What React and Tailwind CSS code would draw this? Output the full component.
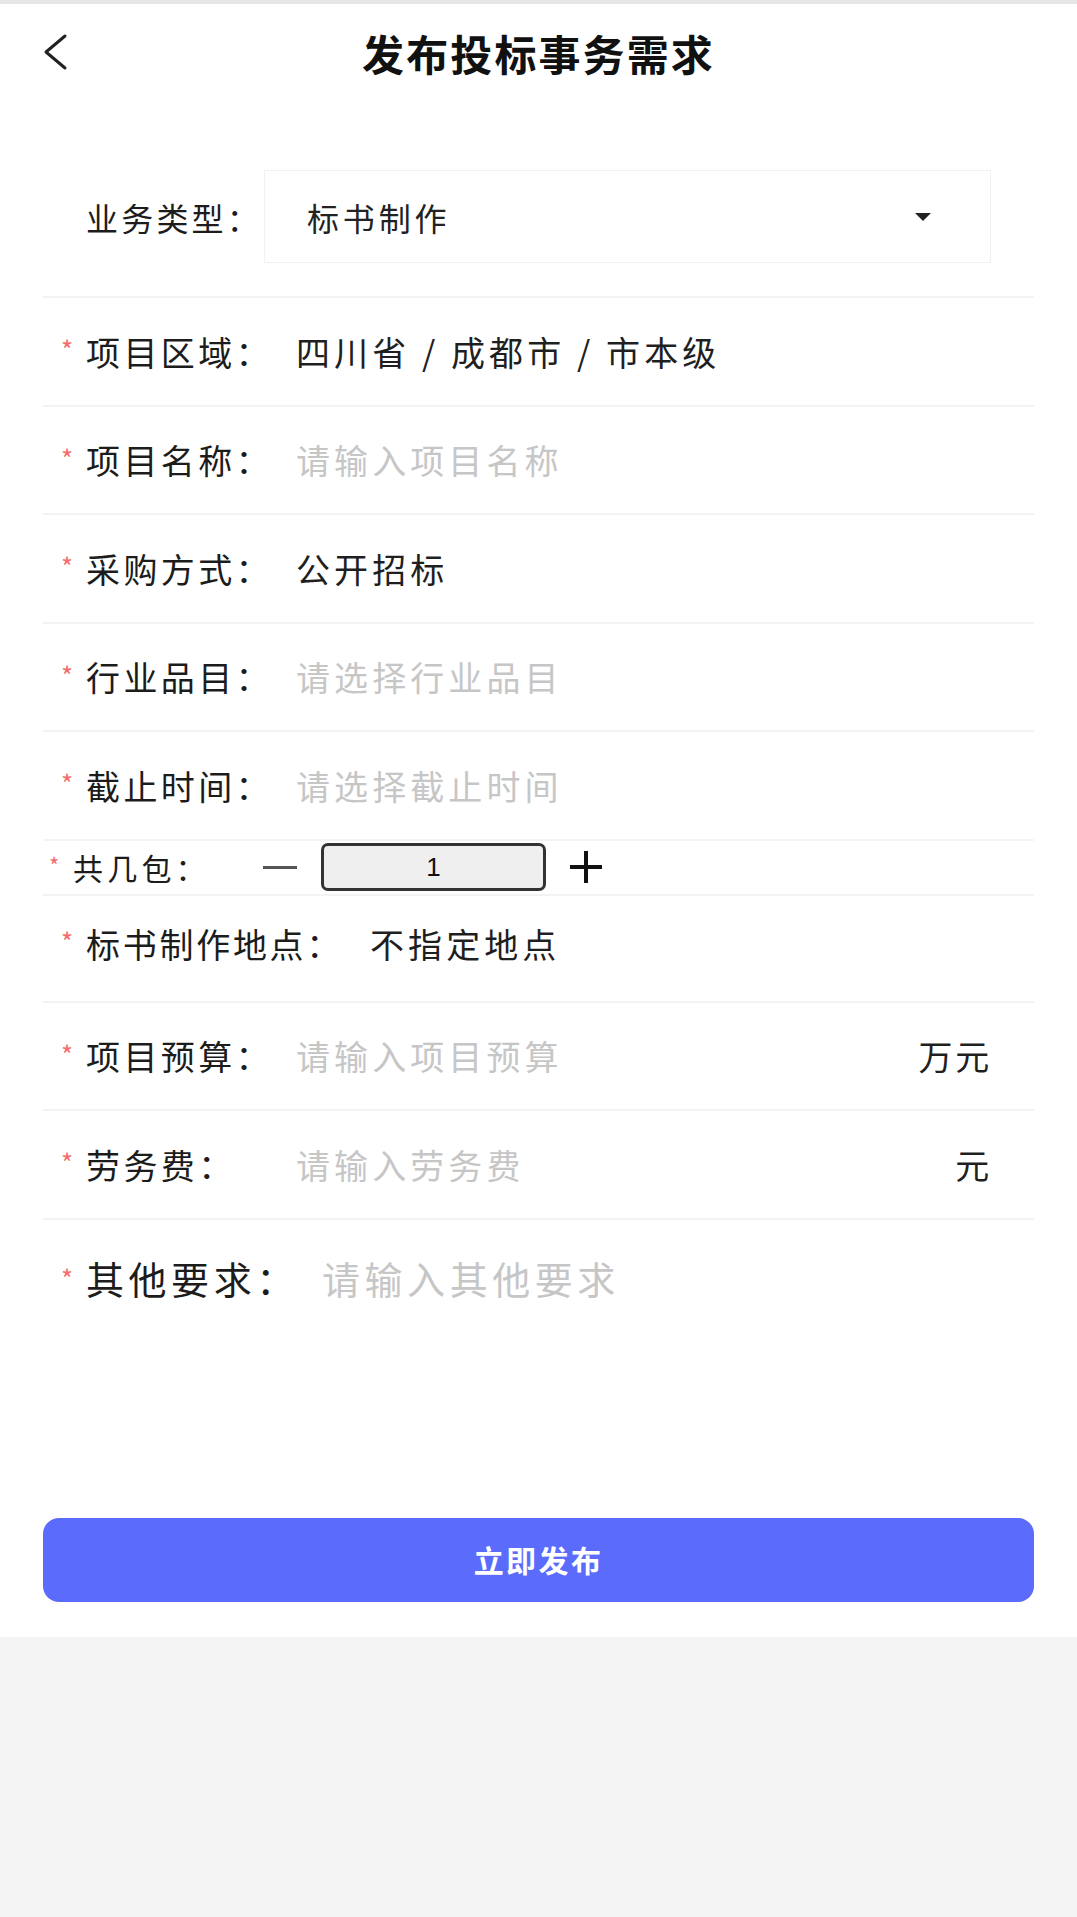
import React from 'react';

const font = { fontFamily: '"Noto Sans CJK SC", "Noto Sans", sans-serif' };

const Star = () => (
  <span className="text-[#f56c6c] text-[26px] leading-none mb-[4px] w-[25px]">*</span>
);

const FormRow = ({ label, value, placeholder, unit }) => (
  <div className="h-[108.5px] flex items-center border-b-2 border-[#f3f3f3] pl-[18px] pr-[42px]">
    <Star />
    <div className="w-[210px] text-[34px] tracking-[0.1em] text-[#1c1c1c]">{label}：</div>
    {value ? (
      <div className="flex-1 text-[34px] tracking-[0.12em] text-[#1f1f1f]">{value}</div>
    ) : (
      <div className="flex-1 text-[34px] tracking-[0.12em] text-[#c6c6c6]">{placeholder}</div>
    )}
    {unit && <div className="text-[34px] tracking-[0.08em] text-[#1f1f1f]">{unit}</div>}
  </div>
);

export default function App() {
  return (
    <div className="w-[1077px] min-h-[1917px] bg-[#f4f4f4]" style={font}>
      <div className="bg-white">
        <div className="h-[4px] bg-[#e6e6e6]" />

        {/* 标题栏 */}
        <div className="h-[96px] flex items-center px-[41px] relative">
          <svg width="28" height="38" viewBox="0 0 28 38" fill="none" stroke="#222" strokeWidth="3" strokeLinecap="round" strokeLinejoin="round">
            <path d="M24 3L5 19l19 16" />
          </svg>
          <h1 className="absolute left-0 right-0 text-center text-[42px] tracking-[0.05em] font-bold text-[#111] pointer-events-none">发布投标事务需求</h1>
        </div>

        {/* 业务类型 */}
        <div className="px-[43px] pt-[70px]">
          <div className="flex items-center pl-[43px] pb-[33px] border-b-2 border-[#f3f3f3]">
            <div className="w-[178px] text-[32px] tracking-[0.1em] text-[#1c1c1c]">业务类型：</div>
            <div className="flex-1 mr-[1px] h-[93px] border border-[#f1f1f1] flex items-center pl-[42px] pr-[58px]">
              <span className="flex-1 text-[32px] tracking-[0.12em] text-[#222]">标书制作</span>
              <svg width="18" height="10" viewBox="0 0 18 10">
                <path d="M1 1h16L9 9z" fill="#222" />
              </svg>
            </div>
            <div className="w-[42px]" />
          </div>

          <FormRow label="项目区域" value="四川省 / 成都市 / 市本级" />
          <FormRow label="项目名称" placeholder="请输入项目名称" />
          <FormRow label="采购方式" value="公开招标" />
          <FormRow label="行业品目" placeholder="请选择行业品目" />
          <FormRow label="截止时间" placeholder="请选择截止时间" />

          {/* 共几包 */}
          <div className="h-[55px] flex items-center border-b-2 border-[#f3f3f3] pl-[6px]">
            <span className="text-[#f56c6c] text-[22px] leading-none mb-[6px] w-[24px]">*</span>
            <div className="w-[190px] text-[30px] tracking-[0.14em] text-[#1c1c1c]">共几包：</div>
            <div className="w-[34px] h-[3px] bg-[#555]" />
            <div className="ml-[24px] w-[225px] h-[48px] rounded-[7px] border-[3px] border-[#333] bg-[#efefef] flex items-center justify-center text-[26px] text-[#111]" style={{ fontFamily: '"Liberation Sans", Arial, sans-serif' }}>1</div>
            <div className="ml-[24px] relative w-[32px] h-[32px]">
              <div className="absolute left-0 top-[14px] w-[32px] h-[4px] bg-[#111]" />
              <div className="absolute left-[14px] top-0 w-[4px] h-[32px] bg-[#111]" />
            </div>
          </div>

          {/* 标书制作地点 */}
          <div className="h-[107px] flex items-center border-b-2 border-[#f3f3f3] pl-[18px] pb-[10px]">
            <Star />
            <div className="w-[284px] text-[34px] tracking-[0.08em] text-[#1c1c1c]">标书制作地点：</div>
            <div className="text-[34px] tracking-[0.12em] text-[#1f1f1f]">不指定地点</div>
          </div>

          <FormRow label="项目预算" placeholder="请输入项目预算" unit="万元" />
          <FormRow label="劳务费" placeholder="请输入劳务费" unit="元" />

          {/* 其他要求 */}
          <div className="h-[298px] flex items-start pl-[18px] pt-[35px]">
            <span className="text-[#f56c6c] text-[26px] leading-none mt-[10px] w-[25px]">*</span>
            <div className="w-[236px] text-[38px] tracking-[0.12em] text-[#1c1c1c] leading-[46px]">其他要求：</div>
            <div className="flex-1 text-[38px] tracking-[0.12em] text-[#c6c6c6] leading-[46px]">请输入其他要求</div>
          </div>

          <button className="w-full h-[84px] rounded-[16px] bg-[#5b6cfc] text-white text-[30px] tracking-[0.08em] font-bold">立即发布</button>
          <div className="h-[35px]" />
        </div>
      </div>
    </div>
  );
}
